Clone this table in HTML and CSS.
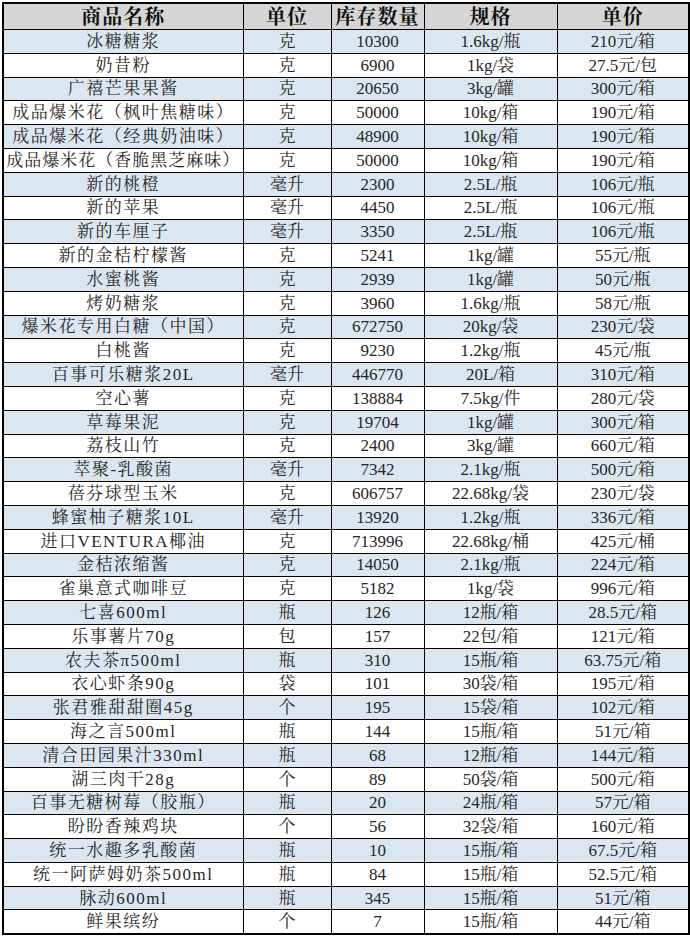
FILE: index.html
```html
<!DOCTYPE html>
<html lang="zh">
<head>
<meta charset="utf-8">
<link rel="stylesheet" href="styles.css">
</head>
<body>
<div class="sheet">
<table class="stock">
<colgroup><col class="c-name"><col class="c-unit"><col class="c-qty"><col class="c-spec"><col class="c-price"></colgroup>
<thead>
<tr><th>商品名称</th><th>单位</th><th>库存数量</th><th>规格</th><th>单价</th></tr>
</thead>
<tbody>
<tr><td class="name">冰糖糖浆</td><td>克</td><td>10300</td><td>1.6kg/瓶</td><td>210元/箱</td></tr>
<tr><td class="name">奶昔粉</td><td>克</td><td>6900</td><td>1kg/袋</td><td>27.5元/包</td></tr>
<tr><td class="name">广禧芒果果酱</td><td>克</td><td>20650</td><td>3kg/罐</td><td>300元/箱</td></tr>
<tr><td class="name">成品爆米花（枫叶焦糖味）</td><td>克</td><td>50000</td><td>10kg/箱</td><td>190元/箱</td></tr>
<tr><td class="name">成品爆米花（经典奶油味）</td><td>克</td><td>48900</td><td>10kg/箱</td><td>190元/箱</td></tr>
<tr><td class="name tight">成品爆米花（香脆黑芝麻味）</td><td>克</td><td>50000</td><td>10kg/箱</td><td>190元/箱</td></tr>
<tr><td class="name">新的桃橙</td><td>毫升</td><td>2300</td><td>2.5L/瓶</td><td>106元/瓶</td></tr>
<tr><td class="name">新的苹果</td><td>毫升</td><td>4450</td><td>2.5L/瓶</td><td>106元/瓶</td></tr>
<tr><td class="name">新的车厘子</td><td>毫升</td><td>3350</td><td>2.5L/瓶</td><td>106元/瓶</td></tr>
<tr><td class="name">新的金桔柠檬酱</td><td>克</td><td>5241</td><td>1kg/罐</td><td>55元/瓶</td></tr>
<tr><td class="name">水蜜桃酱</td><td>克</td><td>2939</td><td>1kg/罐</td><td>50元/瓶</td></tr>
<tr><td class="name">烤奶糖浆</td><td>克</td><td>3960</td><td>1.6kg/瓶</td><td>58元/瓶</td></tr>
<tr><td class="name">爆米花专用白糖（中国）</td><td>克</td><td>672750</td><td>20kg/袋</td><td>230元/袋</td></tr>
<tr><td class="name">白桃酱</td><td>克</td><td>9230</td><td>1.2kg/瓶</td><td>45元/瓶</td></tr>
<tr><td class="name">百事可乐糖浆20L</td><td>毫升</td><td>446770</td><td>20L/箱</td><td>310元/箱</td></tr>
<tr><td class="name">空心薯</td><td>克</td><td>138884</td><td>7.5kg/件</td><td>280元/袋</td></tr>
<tr><td class="name">草莓果泥</td><td>克</td><td>19704</td><td>1kg/罐</td><td>300元/箱</td></tr>
<tr><td class="name">荔枝山竹</td><td>克</td><td>2400</td><td>3kg/罐</td><td>660元/箱</td></tr>
<tr><td class="name">萃聚-乳酸菌</td><td>毫升</td><td>7342</td><td>2.1kg/瓶</td><td>500元/箱</td></tr>
<tr><td class="name">蓓芬球型玉米</td><td>克</td><td>606757</td><td>22.68kg/袋</td><td>230元/袋</td></tr>
<tr><td class="name">蜂蜜柚子糖浆10L</td><td>毫升</td><td>13920</td><td>1.2kg/瓶</td><td>336元/箱</td></tr>
<tr><td class="name">进口VENTURA椰油</td><td>克</td><td>713996</td><td>22.68kg/桶</td><td>425元/桶</td></tr>
<tr><td class="name">金桔浓缩酱</td><td>克</td><td>14050</td><td>2.1kg/瓶</td><td>224元/箱</td></tr>
<tr><td class="name">雀巢意式咖啡豆</td><td>克</td><td>5182</td><td>1kg/袋</td><td>996元/箱</td></tr>
<tr><td class="name">七喜600ml</td><td>瓶</td><td>126</td><td>12瓶/箱</td><td>28.5元/箱</td></tr>
<tr><td class="name">乐事薯片70g</td><td>包</td><td>157</td><td>22包/箱</td><td>121元/箱</td></tr>
<tr><td class="name">农夫茶π500ml</td><td>瓶</td><td>310</td><td>15瓶/箱</td><td>63.75元/箱</td></tr>
<tr><td class="name">衣心虾条90g</td><td>袋</td><td>101</td><td>30袋/箱</td><td>195元/箱</td></tr>
<tr><td class="name">张君雅甜甜圈45g</td><td>个</td><td>195</td><td>15袋/箱</td><td>102元/箱</td></tr>
<tr><td class="name">海之言500ml</td><td>瓶</td><td>144</td><td>15瓶/箱</td><td>51元/箱</td></tr>
<tr><td class="name">清合田园果汁330ml</td><td>瓶</td><td>68</td><td>12瓶/箱</td><td>144元/箱</td></tr>
<tr><td class="name">湖三肉干28g</td><td>个</td><td>89</td><td>50袋/箱</td><td>500元/箱</td></tr>
<tr><td class="name">百事无糖树莓（胶瓶）</td><td>瓶</td><td>20</td><td>24瓶/箱</td><td>57元/箱</td></tr>
<tr><td class="name">盼盼香辣鸡块</td><td>个</td><td>56</td><td>32袋/箱</td><td>160元/箱</td></tr>
<tr><td class="name">统一水趣多乳酸菌</td><td>瓶</td><td>10</td><td>15瓶/箱</td><td>67.5元/箱</td></tr>
<tr><td class="name">统一阿萨姆奶茶500ml</td><td>瓶</td><td>84</td><td>15瓶/箱</td><td>52.5元/箱</td></tr>
<tr><td class="name">脉动600ml</td><td>瓶</td><td>345</td><td>15瓶/箱</td><td>51元/箱</td></tr>
<tr><td class="name">鲜果缤纷</td><td>个</td><td>7</td><td>15瓶/箱</td><td>44元/箱</td></tr>
</tbody>
</table>
</div>
</body>
</html>
```
FILE: styles.css
```css
html, body {
  margin: 0;
  padding: 0;
  background: #ffffff;
}
.sheet {
  padding: 2px 0 0 2px;
}
.stock {
  border-collapse: collapse;
  table-layout: fixed;
  width: 686px;
  font-family: "Liberation Serif", "Noto Serif CJK SC", "Noto Sans CJK SC", serif;
  color: #262626;
  border: 2px solid #000;
}
.c-name { width: 240px; }
.c-unit { width: 88px; }
.c-qty { width: 93px; }
.c-spec { width: 133px; }
.c-price { width: 132px; }
.stock th,
.stock td {
  border: 1px solid #000;
  padding: 0;
  text-align: center;
  white-space: nowrap;
  overflow: visible;
  line-height: 1;
}
.stock th {
  height: 25px;
  background: #d6d6d6;
  font-size: 20px;
  font-weight: bold;
  color: #111;
  letter-spacing: 1px;
}
.stock td {
  height: 22.8px;
  font-size: 17px;
  font-weight: normal;
}
.stock tbody tr:nth-child(odd) td {
  background: #dce6f1;
}
.stock tbody tr:nth-child(even) td {
  background: #ffffff;
}
.stock td.name {
  letter-spacing: 1.5px;
}
.stock td.name.tight {
  letter-spacing: 1px;
}
```
